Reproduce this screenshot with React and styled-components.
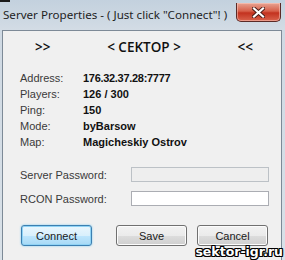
import { Fragment } from "react";
import styled, { createGlobalStyle } from "styled-components";

const Global = createGlobalStyle`
  html, body {
    margin: 0;
    padding: 0;
    background: #dfe6ec;
  }
`;

const Window = styled.div`
  position: relative;
  width: 285px;
  height: 260px;
  overflow: hidden;
  display: flex;
  flex-direction: column;
  background: linear-gradient(180deg, #bfcddb 0%, #cfd9e3 12%, #d9e1e8 100%);
  font-family: "Liberation Sans", Arial, sans-serif;
`;

const TitleBar = styled.div`
  height: 30px;
  flex: none;
  display: flex;
  align-items: flex-start;
  justify-content: space-between;
  background: linear-gradient(180deg, #c3d1de 0%, #c9d5e0 40%, #d3dce5 100%);
`;

const Caption = styled.div`
  padding: 7px 0 0 3px;
  font-family: "Noto Sans", "Open Sans", sans-serif;
  font-size: 11.6px;
  line-height: 16px;
  color: #1e1e1e;
  white-space: nowrap;
`;

const CloseButton = styled.div`
  width: 45px;
  height: 19px;
  margin: 3px 4px 0 0;
  box-sizing: border-box;
  border: 1px solid #5b2a26;
  border-top: none;
  border-radius: 0 0 5px 5px;
  background: linear-gradient(180deg, #e8a493 0%, #d7604a 45%, #c3321f 55%, #d9634c 100%);
  box-shadow: inset 0 0 0 1px rgba(255, 210, 200, 0.5);
  display: flex;
  align-items: center;
  justify-content: center;
`;

const Client = styled.div`
  flex: 1;
  margin: 0 3px 0 2px;
  border: 1px solid #7d8a97;
  border-bottom: none;
  background: #f0f0f0;
  display: flex;
  flex-direction: column;
`;

const Header = styled.div`
  height: 32px;
  display: flex;
  align-items: center;
  justify-content: space-between;
  padding: 0 28px 0 32px;
  font-family: "Open Sans", "Noto Sans", sans-serif;
  font-size: 13.5px;
  font-weight: 600;
  color: #111;
`;

const Info = styled.div`
  margin-top: 7px;
  display: grid;
  grid-template-columns: 63px 1fr;
  grid-auto-rows: 16px;
  align-items: center;
  padding-left: 17px;
  font-size: 11px;
`;

const Label = styled.div`
  color: #3a3a3a;
`;

const Value = styled.div`
  color: #111;
  font-weight: bold;
  letter-spacing: ${(p) => (p.$tight ? "-0.3px" : "0")};
`;

const Fields = styled.div`
  margin-top: 17px;
  display: flex;
  flex-direction: column;
  gap: 9px;
  padding: 0 12px 0 17px;
`;

const FieldRow = styled.div`
  display: flex;
  align-items: center;
  justify-content: space-between;
  font-size: 11px;
  color: #3a3a3a;
`;

const Input = styled.div`
  width: 138px;
  height: 15px;
  box-sizing: border-box;
  border: 1px solid ${(p) => (p.$disabled ? "#bcc1c6" : "#abadb3")};
  background: ${(p) => (p.$disabled ? "#eeeeee" : "#ffffff")};
`;

const Buttons = styled.div`
  margin-top: 19px;
  display: flex;
  padding-left: 18px;
  gap: 10px;
`;

const Button = styled.div`
  width: 71px;
  height: 21px;
  box-sizing: border-box;
  border-radius: 3px;
  display: flex;
  align-items: center;
  justify-content: center;
  font-size: 11px;
  color: #1a1a1a;
  margin-right: ${(p) => (p.$gapAfter ? "14px" : "0")};
  border: 1px solid ${(p) => (p.$default ? "#3c7fb1" : "#707070")};
  background: ${(p) =>
    p.$default
      ? "linear-gradient(180deg, #eaf6fd 0%, #d9f0fc 50%, #bee6fd 51%, #a7d9f5 100%)"
      : "linear-gradient(180deg, #f2f2f2 0%, #ebebeb 50%, #dddddd 51%, #cfcfcf 100%)"};
  box-shadow: ${(p) =>
    p.$default
      ? "inset 0 0 0 1px #8fd3f5, 0 0 2px #6cc7f0"
      : "inset 0 0 0 1px #fcfcfc"};
`;

const Watermark = styled.div`
  position: absolute;
  right: 2px;
  bottom: 1px;
  font-family: "DejaVu Sans", sans-serif;
  font-weight: bold;
  font-size: 12.5px;
  line-height: 14px;
  color: #ffffff;
  text-shadow: -1px -1px 0 #000, 1px -1px 0 #000, -1px 1px 0 #000, 1px 1px 0 #000,
    0 -1px 0 #000, 0 1px 0 #000, -1px 0 0 #000, 1px 0 0 #000;
`;

const Corner = styled.div`
  position: absolute;
  left: 0;
  top: 0;
  width: 10px;
  height: 2px;
  background: #1a1a1a;
`;

const rows = [
  ["Address:", "176.32.37.28:7777", true],
  ["Players:", "126 / 300"],
  ["Ping:", "150"],
  ["Mode:", "byBarsow"],
  ["Map:", "Magicheskiy Ostrov"],
];

export default function App() {
  return (
    <Window>
      <Global />
      <Corner />
      <TitleBar>
        <Caption>Server Properties - ( Just click "Connect"! )</Caption>
        <CloseButton>
          <svg width="13" height="11" viewBox="0 0 13 11">
            <path
              d="M2 1.5 L11 9.5 M11 1.5 L2 9.5"
              stroke="#4a1b16"
              strokeWidth="4"
              strokeLinecap="square"
            />
            <path
              d="M2 1.5 L11 9.5 M11 1.5 L2 9.5"
              stroke="#ffffff"
              strokeWidth="2.2"
              strokeLinecap="square"
            />
          </svg>
        </CloseButton>
      </TitleBar>
      <Client>
        <Header>
          <span>&gt;&gt;</span>
          <span>&lt; CEKTOP &gt;</span>
          <span>&lt;&lt;</span>
        </Header>
        <Info>
          {rows.map(([label, value, tight]) => (
            <Fragment key={label}>
              <Label>{label}</Label>
              <Value $tight={tight}>{value}</Value>
            </Fragment>
          ))}
        </Info>
        <Fields>
          <FieldRow>
            Server Password:
            <Input $disabled />
          </FieldRow>
          <FieldRow>
            RCON Password:
            <Input />
          </FieldRow>
        </Fields>
        <Buttons>
          <Button $default $gapAfter>
            Connect
          </Button>
          <Button>Save</Button>
          <Button>Cancel</Button>
        </Buttons>
      </Client>
      <Watermark>sektor-igr.ru</Watermark>
    </Window>
  );
}
